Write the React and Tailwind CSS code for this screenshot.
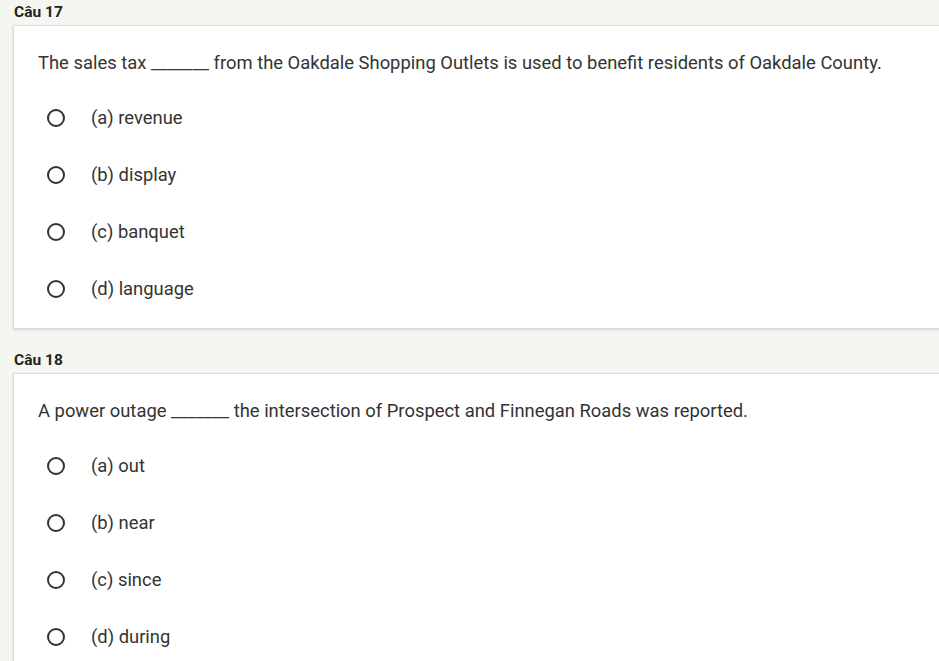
export default function App() {
  const questions = [
    {
      num: 17,
      text: 'The sales tax _______ from the Oakdale Shopping Outlets is used to benefit residents of Oakdale County.',
      options: ['(a) revenue', '(b) display', '(c) banquet', '(d) language'],
    },
    {
      num: 18,
      text: 'A power outage _______ the intersection of Prospect and Finnegan Roads was reported.',
      options: ['(a) out', '(b) near', '(c) since', '(d) during'],
    },
  ];

  return (
    <div className="h-[661px] w-[939px] overflow-hidden bg-[#f5f5f2] pl-[13px] font-['Roboto',sans-serif] text-[#333]">
      {questions.map((q) => (
        <section key={q.num} className="mb-[19px]">
          <h3 className="flex h-[25px] items-center px-px pt-px text-[15.5px] font-bold text-[#222]">Câu {q.num}</h3>
          <div className="w-[940px] border border-[#dcdcdc] bg-white pb-[11px] pl-[24px] pt-[25px] shadow-[0_1px_2px_rgba(0,0,0,0.12)]">
            <p className="mb-[14px] text-[18.4px] leading-6">{q.text}</p>
            <ul>
              {q.options.map((o) => (
                <li key={o} className="flex h-[57px] items-center">
                  <span className="ml-[9px] h-[18px] w-[18px] rounded-full border-2 border-[#333]" />
                  <span className="ml-[26px] text-[18.4px] leading-6">{o}</span>
                </li>
              ))}
            </ul>
          </div>
        </section>
      ))}
    </div>
  );
}
